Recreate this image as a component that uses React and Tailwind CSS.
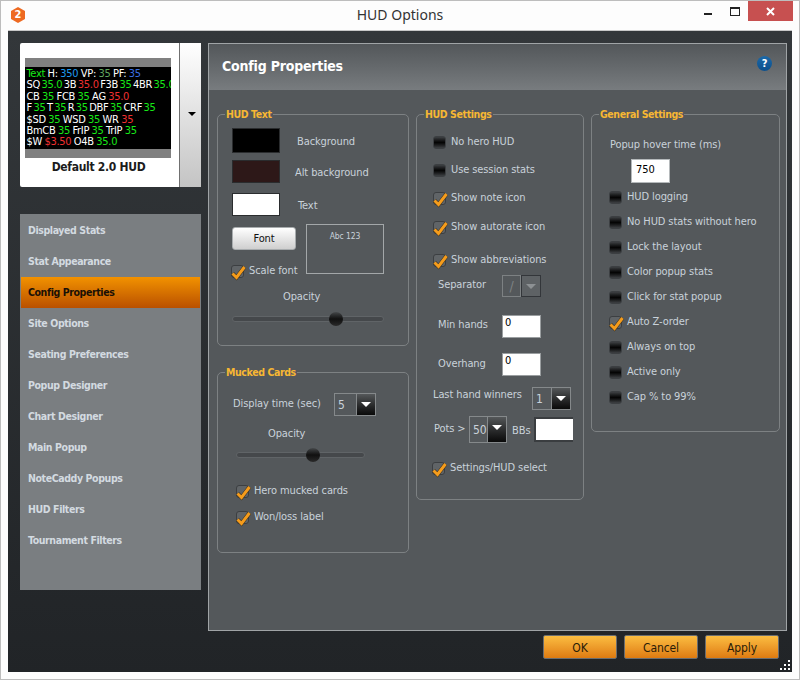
import React from "react";

const Check = ({ on, label, className = "" }) => (
  <div className={"flex items-center h-[14px] " + className}>
    <div className={"relative w-[13px] h-[13px] rounded-[3px] border border-[#3c3f42] shrink-0 " + (on ? "bg-[#606467]" : "bg-gradient-to-b from-[#3e4144] via-[#050505] to-[#3e4144]")}>
      {on && (
        <svg className="absolute -left-[2px] -top-[3px]" width="17" height="18" viewBox="0 0 17 18">
          <path d="M2.5 10.5 L6.5 14.5 L14.5 4" fill="none" stroke="#3a3020" strokeWidth="4" />
          <path d="M2.5 10.5 L6.5 14.5 L14.5 4" fill="none" stroke="#f59c1c" strokeWidth="3" />
        </svg>
      )}
    </div>
    <span className="ml-[5px] whitespace-nowrap">{label}</span>
  </div>
);

const Legend = ({ children }) => (
  <span className="absolute left-[7px] -top-[8px] h-[14px] leading-[14px] px-[1px] bg-[#54585b] font-bold text-[10.5px] tracking-[-0.4px] text-[#f7b733] whitespace-nowrap">{children}</span>
);

const Group = ({ title, className, children }) => (
  <div className={"relative rounded-[5px] border border-[#7d8183] " + className}>
    <Legend>{title}</Legend>
    {children}
  </div>
);

const Slider = ({ width, pos, className = "" }) => (
  <div className={"relative h-[6px] rounded-[3px] bg-[#45484b] border border-[#606467] " + className} style={{ width }}>
    <div className="absolute -top-[5px] w-[14px] h-[14px] rounded-full bg-gradient-to-b from-[#45484a] via-[#101010] to-[#2a2a2a]" style={{ left: pos }} />
  </div>
);

const Combo = ({ value, w, h, arrowW, className = "" }) => (
  <div className={"flex border border-[#85898b] text-[#c9d2da] " + className} style={{ width: w, height: h }}>
    <div className="flex-1 flex items-center pl-[3px] text-[12px]">{value}</div>
    <div className="flex justify-center pt-[8px] bg-gradient-to-b from-[#55585a] to-[#0a0a0a] border-l border-[#85898b]" style={{ width: arrowW }}>
      <div className="w-0 h-0 border-l-[5px] border-r-[5px] border-t-[5px] border-l-transparent border-r-transparent border-t-white" />
    </div>
  </div>
);

const Input = ({ value, className = "" }) => (
  <div className={"w-[39px] h-[23px] bg-white border border-[#9a9ea0] text-black text-[11px] leading-[14px] pl-[2px] " + className}>{value}</div>
);

const Swatch = ({ color, label, labelMl }) => (
  <div className="flex items-center h-full">
    <div className="w-[48px] h-full border border-[#2a2c2e]" style={{ background: color }} />
    <span className="pt-[3px]" style={{ marginLeft: labelMl }}>{label}</span>
  </div>
);

const G = "text-[#17e817]";
const R = "text-[#f03030]";
const W = "text-white";
const B = "text-[#1e9bf0]";
const S = ({ c, children }) => <span className={c}>{children}</span>;

const Line = ({ wide, children }) => (
  <div className={"flex h-[11.4px] leading-[11px] whitespace-nowrap tracking-[-0.3px] " + (wide ? "gap-[2.5px]" : "gap-[1.5px]")}>{children}</div>
);

const menu = ["Displayed Stats", "Stat Appearance", "Config Properties", "Site Options", "Seating Preferences", "Popup Designer", "Chart Designer", "Main Popup", "NoteCaddy Popups", "HUD Filters", "Tournament Filters"];

export default function App() {
  return (
    <div className="w-[800px] h-[680px] flex flex-col border border-[#bdbdbd] bg-[#fdfdfd] overflow-hidden text-[11px] tracking-[-0.1px] text-[#c9d2da] font-['DejaVu_Sans_Condensed','DejaVu_Sans',sans-serif]">
      {/* Title bar */}
      <div className="relative h-[29px] shrink-0 flex items-center justify-center">
        <div className="absolute left-[9px] top-[6px] w-[16px] h-[16px]">
          <svg width="16" height="16" viewBox="0 0 16 16" className="absolute inset-0">
            <polygon points="8,0 15,4 15,12 8,16 1,12 1,4" fill="#ee6a22" />
          </svg>
          <span className="absolute inset-0 flex items-center justify-center text-white font-bold text-[11px]">2</span>
        </div>
        <span className="text-[14px] tracking-normal text-[#333] font-['Noto_Sans',sans-serif] pb-[2px]">HUD Options</span>
        <div className="absolute left-[703px] top-[12px] w-[8px] h-[2px] bg-[#222]" />
        <div className="absolute left-[729px] top-[6px] w-[10px] h-[9px] border border-[#222] border-t-2" />
        <div className="absolute left-[747px] top-0 w-[45px] h-[20px] bg-[#c75050] flex items-center justify-center">
          <svg width="9" height="9" viewBox="0 0 9 9"><path d="M1 1 L8 8 M8 1 L1 8" stroke="#fff" strokeWidth="2" /></svg>
        </div>
      </div>

      {/* Client area */}
      <div className="relative mx-[7px] w-[784px] h-[642px] shrink-0 border-t border-[#c8c8c8] bg-gradient-to-b from-[#33373a] to-[#212427] flex pt-[12px] pl-[12px]">
        {/* Left column */}
        <div className="w-[181px] shrink-0 flex flex-col">
          <div className="h-[144px] rounded-[2px] bg-white flex">
            <div className="flex-1 flex flex-col items-center pt-[15px]">
              <div className="w-[146px] ml-[-4px] h-[100px] bg-[#808080] py-[9px]">
                <div className="h-[82px] bg-black pt-[1px] pl-[2px] overflow-hidden text-[11px]">
                  <Line wide><S c={G}>Text</S><S c={W}>H:</S><S c={B}>350</S><S c={W}>VP:</S><S c="text-[#5fa55f]">35</S><S c={W}>PF:</S><S c="text-[#3a6fe0]">35</S></Line>
                  <Line><S c={W}>SQ</S><S c={G}>35.0</S><S c={W}>3B</S><S c={R}>35.0</S><S c={W}>F3B</S><S c={G}>35</S><S c={W}>4BR</S><S c={G}>35.0</S></Line>
                  <Line wide><S c={W}>CB</S><S c={G}>35</S><S c={W}>FCB</S><S c={G}>35</S><S c={W}>AG</S><S c={R}>35.0</S></Line>
                  <Line><S c={W}>F</S><S c={G}>35</S><S c={W}>T</S><S c={G}>35</S><S c={W}>R</S><S c={G}>35</S><S c={W}>DBF</S><S c={G}>35</S><S c={W}>CRF</S><S c={G}>35</S></Line>
                  <Line wide><S c={W}>$SD</S><S c={G}>35</S><S c={W}>WSD</S><S c={G}>35</S><S c={W}>WR</S><S c={R}>35</S></Line>
                  <Line wide><S c={W}>BmCB</S><S c={G}>35</S><S c={W}>FrIP</S><S c={G}>35</S><S c={W}>TrIP</S><S c={G}>35</S></Line>
                  <Line wide><S c={W}>$W</S><S c={R}>$3.50</S><S c={W}>O4B</S><S c={G}>35.0</S></Line>
                </div>
              </div>
              <div className="mt-[1px] font-bold text-[12px] tracking-[-0.3px] text-[#1c1c1c] leading-[16px] ml-[-2px]">Default 2.0 HUD</div>
            </div>
            <div className="w-[22px] border-l border-[#707070] bg-gradient-to-b from-white to-[#c4c4c4] flex justify-center items-center pb-[3px]">
              <div className="ml-[3px] w-0 h-0 border-l-[4px] border-r-[4px] border-t-[4px] border-l-transparent border-r-transparent border-t-black" />
            </div>
          </div>
          <div className="mt-[27px] h-[376px] bg-[#7a7e81] px-[1px] pt-[1px]">
            {menu.map((m, i) => (
              <div key={m} className={"h-[31px] flex items-center pl-[7px] pt-[1px] font-bold text-[10.5px] tracking-[-0.4px] " + (i === 2 ? "bg-gradient-to-b from-[#f29200] to-[#b95000] text-[#1a1006]" : "text-[#d3dae0]")}>{m}</div>
            ))}
          </div>
        </div>

        {/* Main panel */}
        <div className="ml-[7px] w-[579px] h-[588px] border border-[#a0a4a6] bg-[#54585b] flex flex-col">
          <div className="relative h-[46px] shrink-0 bg-gradient-to-b from-[#53575a] to-[#787c7f] flex items-center pl-[13px] pb-[1px] text-[14px] tracking-[-0.2px] font-bold text-white">
            Config Properties
            <div className="absolute left-[548px] top-[12px] w-[15px] h-[15px] rounded-full bg-gradient-to-b from-[#1c69a8] to-[#0c4f8c] flex items-center justify-center text-white text-[11px] font-bold leading-none">?</div>
          </div>
          <div className="flex gap-[7px] pl-[8px] pt-[24px]">
            {/* Column 1 */}
            <div className="w-[192px] shrink-0 flex flex-col">
              <Group title="HUD Text" className="h-[232px] pl-[14px] pt-[13px]">
                <div className="h-[25px]"><Swatch color="#000" label="Background" labelMl="17px" /></div>
                <div className="h-[23px] mt-[7px]"><Swatch color="#2d1818" label="Alt background" labelMl="15px" /></div>
                <div className="h-[23px] mt-[10px]"><Swatch color="#fff" label="Text" labelMl="18px" /></div>
                <div className="flex mt-[8px]">
                  <div className="w-[74px]">
                    <div className="mt-[3px] w-[64px] h-[23px] rounded-[3px] border border-[#a8acae] bg-gradient-to-b from-white to-[#cfcfcf] text-[#111] text-center leading-[21px]">Font</div>
                    <Check on label="Scale font" className="mt-[14px] -ml-[1px]" />
                  </div>
                  <div className="w-[78px] h-[50px] border border-[#a3a7a9] text-center text-[8.5px] leading-[12px] pt-[5px]">Abc 123</div>
                </div>
                <div className="h-[14px] leading-[14px] mt-[12px] ml-[51px]">Opacity</div>
                <Slider width={152} pos={96} className="mt-[12px]" />
              </Group>
              <Group title="Mucked Cards" className="mt-[26px] h-[181px] pl-[15px] pt-[20px]">
                <div className="flex items-center">
                  <span className="w-[101px] whitespace-nowrap pb-[1px]">Display time (sec)</span>
                  <Combo value="5" w={42} h={23} arrowW={19} />
                </div>
                <div className="h-[14px] leading-[14px] mt-[11px] ml-[35px]">Opacity</div>
                <Slider width={129} pos={69} className="mt-[11px] ml-[3px]" />
                <Check on label="Hero mucked cards" className="mt-[26px] ml-[3px]" />
                <Check on label="Won/loss label" className="mt-[12px] ml-[3px]" />
              </Group>
            </div>

            {/* Column 2 */}
            <Group title="HUD Settings" className="w-[168px] h-[386px] shrink-0 pl-[16px] pt-[20px]">
              <Check label="No hero HUD" />
              <Check label="Use session stats" className="mt-[14px]" />
              <Check on label="Show note icon" className="mt-[14px]" />
              <Check on label="Show autorate icon" className="mt-[15px]" />
              <Check on label="Show abbreviations" className="mt-[19px]" />
              <div className="flex items-center h-[22px] mt-[8px] ml-[5px]">
                <span className="w-[64px] pb-[2px]">Separator</span>
                <div className="flex w-[39px] h-full text-[#7d8183]">
                  <div className="w-[19px] border border-[#7d8183] flex items-center justify-center text-[14px]">/</div>
                  <div className="w-[20px] border border-[#33363a] bg-[#5e6265] flex justify-center pt-[8px]">
                    <div className="w-0 h-0 border-l-[5px] border-r-[5px] border-t-[5px] border-l-transparent border-r-transparent border-t-[#8d9194]" />
                  </div>
                </div>
              </div>
              <div className="flex items-center h-[23px] mt-[18px] ml-[5px]">
                <span className="w-[64px] pb-[2px]">Min hands</span><Input value="0" />
              </div>
              <div className="flex items-center h-[23px] mt-[15px] ml-[5px]">
                <span className="w-[64px]">Overhang</span><Input value="0" />
              </div>
              <div className="flex items-start h-[23px] mt-[11px]">
                <span className="w-[99px] whitespace-nowrap">Last hand winners</span>
                <Combo value="1" w={39} h={23} arrowW={19} />
              </div>
              <div className="flex items-center h-[27px] mt-[6px] ml-[1px]">
                <span className="w-[35px] pb-[1px]">Pots &gt;</span>
                <Combo value="50" w={38} h={27} arrowW={19} />
                <span className="ml-[5px] w-[22px] pt-[3px]">BBs</span>
                <div className="w-[39px] h-[25px] bg-white border-2 border-[#3a3d40] border-r-0" />
              </div>
              <Check on label="Settings/HUD select" className="mt-[18px] -ml-[1px]" />
            </Group>

            {/* Column 3 */}
            <Group title="General Settings" className="w-[189px] h-[318px] shrink-0 pl-[17px] pt-[23px]">
              <div className="leading-[14px] ml-[1px]">Popup hover time (ms)</div>
              <Input value="750" className="ml-[22px] mt-[7px] h-[24px] leading-[20px] pl-[4px] border-[#b5b9bb]" />
              <Check label="HUD logging" className="mt-[7px]" />
              {["No HUD stats without hero", "Lock the layout", "Color popup stats", "Click for stat popup"].map((t) => (
                <Check key={t} label={t} className="mt-[11px]" />
              ))}
              <Check on label="Auto Z-order" className="mt-[11px]" />
              {["Always on top", "Active only", "Cap % to 99%"].map((t) => (
                <Check key={t} label={t} className="mt-[11px]" />
              ))}
            </Group>
          </div>
        </div>

        {/* Buttons */}
        <div className="absolute left-[535px] top-[604px] flex gap-[7px]">
          {["OK", "Cancel", "Apply"].map((b) => (
            <div key={b} className="w-[74px] h-[24px] pt-[1px] rounded-[2px] border border-[#6a6d70] bg-gradient-to-b from-[#fbbd40] to-[#de7b10] text-[#2a1c08] text-[12px] flex items-center justify-center">{b}</div>
          ))}
        </div>
        <svg className="absolute left-[772px] top-[629px]" width="11" height="11" viewBox="0 0 11 11" fill="#fff">
          <rect x="8" y="0" width="2" height="2" /><rect x="4" y="4" width="2" height="2" /><rect x="8" y="4" width="2" height="2" />
          <rect x="0" y="8" width="2" height="2" /><rect x="4" y="8" width="2" height="2" /><rect x="8" y="8" width="2" height="2" />
        </svg>
      </div>
    </div>
  );
}
